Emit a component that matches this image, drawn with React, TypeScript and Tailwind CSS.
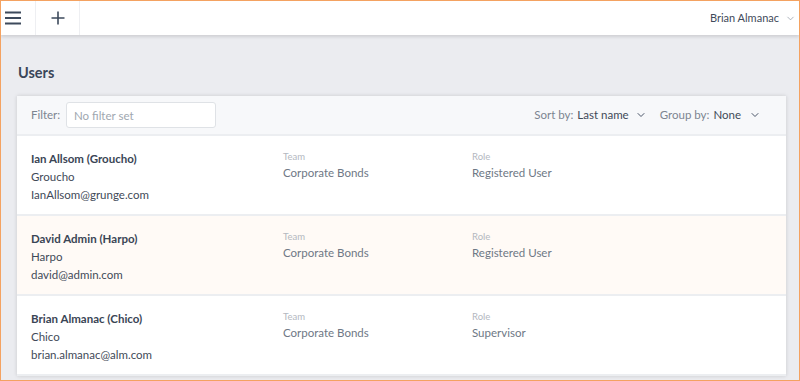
import { ChevronDown } from "lucide-react";

const users = [
  { name: "Ian Allsom (Groucho)", nick: "Groucho", email: "IanAllsom@grunge.com", team: "Corporate Bonds", role: "Registered User", tint: false },
  { name: "David Admin (Harpo)", nick: "Harpo", email: "david@admin.com", team: "Corporate Bonds", role: "Registered User", tint: true },
  { name: "Brian Almanac (Chico)", nick: "Chico", email: "brian.almanac@alm.com", team: "Corporate Bonds", role: "Supervisor", tint: false },
];

function Header() {
  return (
    <div className="relative z-10 flex h-[34px] items-stretch bg-white shadow-[0_2px_3px_rgba(0,0,0,0.12)]">
      <button className="flex w-[35px] items-center justify-center border-r border-[#eeeff2]">
        <svg width="16" height="14" viewBox="0 0 16 14" className="-ml-[10px]">
          <path d="M0 1.5h16M0 7h16M0 12.5h16" stroke="#3d4a5c" strokeWidth="1.8" />
        </svg>
      </button>
      <button className="flex w-[44px] items-center justify-center border-r border-[#eeeff2]">
        <svg width="14" height="14" viewBox="0 0 14 14">
          <path d="M7 0.5v13M0.5 7h13" stroke="#3d4a5c" strokeWidth="1.6" />
        </svg>
      </button>
      <div className="flex-1" />
      <div className="flex items-center gap-[6px] pr-[3px] text-[11px] text-[#3f4a5a]">
        <span>Brian Almanac</span>
        <ChevronDown size={11} strokeWidth={1.5} className="text-[#8a93a0]" />
      </div>
    </div>
  );
}

function UserRow({ u }: { u: (typeof users)[number] }) {
  return (
    <div className={`flex h-[80px] border-b-2 border-[#eceef1] pt-[14px] ${u.tint ? "bg-[#fffaf6]" : "bg-white"}`}>
      <div className="w-[266px] pl-[14px] text-[11.5px] leading-[18px] text-[#3f4a58]">
        <div className="font-bold text-[#3a4555]">{u.name}</div>
        <div>{u.nick}</div>
        <div>{u.email}</div>
      </div>
      <div className="w-[189px]">
        <div className="text-[9.5px] leading-[14px] text-[#b3b8bf]">Team</div>
        <div className="text-[11.5px] leading-[18px] text-[#6e7885]">{u.team}</div>
      </div>
      <div>
        <div className="text-[9.5px] leading-[14px] text-[#b3b8bf]">Role</div>
        <div className="text-[11.5px] leading-[18px] text-[#6e7885]">{u.role}</div>
      </div>
    </div>
  );
}

export default function App() {
  return (
    <div
      className="h-[381px] w-[800px] overflow-hidden border border-[#f4a261] bg-[#ebecf0]"
      style={{ fontFamily: "Lato, 'Noto Sans', sans-serif" }}
    >
      <Header />
      <div className="px-[16px] pt-[28px]">
        <h1 className="pl-[1px] text-[14.5px] font-bold leading-[20px] text-[#3a4658]">Users</h1>
        <div className="mt-[13px] mr-[-3px] bg-white shadow-[0_0_4px_rgba(0,0,0,0.15)]">
          <div className="flex h-[40px] items-center border-b-2 border-[#eceef1] bg-[#f7f8fa] px-[14px]">
            <span className="w-[35px] text-[11.5px] text-[#7c8591]">Filter:</span>
            <input
              className="h-[26px] w-[150px] rounded-[3px] border border-[#dfe2e6] bg-white px-[7px] text-[11.5px] outline-none placeholder:text-[#a0a7b0]"
              placeholder="No filter set"
            />
            <div className="flex-1" />
            <div className="flex items-center text-[11.5px]">
              <span className="text-[#7c8591]">Sort by:</span>
              <span className="ml-1 text-[#3f4a58]">Last name</span>
              <ChevronDown size={12} strokeWidth={2} className="ml-[6px] text-[#4a5568]" />
              <span className="ml-[13px] text-[#7c8591]">Group by:</span>
              <span className="ml-1 text-[#3f4a58]">None</span>
              <ChevronDown size={12} strokeWidth={2} className="ml-[8px] mr-[11px] text-[#4a5568]" />
            </div>
          </div>
          {users.map((u) => (
            <UserRow key={u.email} u={u} />
          ))}
        </div>
      </div>
    </div>
  );
}
